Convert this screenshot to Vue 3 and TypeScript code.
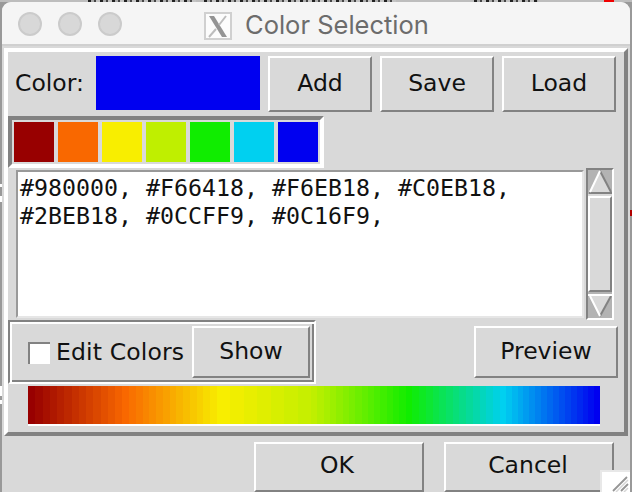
<script setup lang="ts">
type Rgb = [number, number, number]

const swatches: Rgb[] = [
  [152, 0, 0],
  [249, 104, 0],
  [248, 238, 0],
  [191, 239, 0],
  [16, 237, 0],
  [0, 208, 240],
  [0, 0, 240],
]
const codes = '#980000, #F66418, #F6EB18, #C0EB18, #2BEB18, #0CCFF9, #0C16F9,'

const stepCounts = [13, 14, 7, 15, 14, 16]
const css = (c: Rgb) => `rgb(${c.join(',')})`

const bands: { color: string; size: number }[] = []
stepCounts.forEach((n, i) => {
  for (let k = 0; k < n; k++) {
    const t = k / n
    const mixed = swatches[i].map((v, j) => Math.round(v + (swatches[i + 1][j] - v) * t)) as Rgb
    bands.push({ color: css(mixed), size: 1 / n })
  }
})
bands.push({ color: css(swatches[6]), size: 0.06 })
</script>

<template>
  <div class="screen">
    <i class="mark m1"></i><i class="mark m2"></i><i class="mark m3"></i>
    <i class="mark red"></i><i class="mark redtop"></i>
    <div class="window">
      <header class="titlebar">
        <div class="lights"><span></span><span></span><span></span></div>
        <div class="title">
          <svg width="28" height="28" viewBox="0 0 28 28">
            <rect x="1" y="1" width="26" height="26" fill="#fcfcfc" stroke="#d0d0d0" stroke-width="2" />
            <path d="M5 4H10L23 25H18Z" fill="#949494" />
            <path d="M22 4L15 13M12 17L5 25" stroke="#bdbdbd" stroke-width="2" fill="none" />
          </svg>
          <span>Color Selection</span>
        </div>
      </header>
      <main class="frame">
        <div class="toprow">
          <span class="label">Color:</span>
          <div class="current"></div>
          <button class="add">Add</button>
          <button class="save">Save</button>
          <button class="load">Load</button>
        </div>
        <div class="swatches">
          <span v-for="(c, i) in swatches" :key="i" :style="{ background: css(c) }"></span>
        </div>
        <div class="editor">
          <div class="codes">{{ codes }}</div>
          <div class="scroll">
            <svg width="24" height="24" viewBox="0 0 24 24">
              <path d="M12 1L23 23H1Z" fill="#d9d9d9" />
              <path d="M12 1L23 22" stroke="#828282" stroke-width="2" />
              <path d="M1 23H24" stroke="#828282" stroke-width="2" />
              <path d="M12 1L2 22" stroke="#fff" stroke-width="2" />
            </svg>
            <div class="thumb"></div>
            <svg width="24" height="24" viewBox="0 0 24 24">
              <path d="M1 1H23L12 22Z" fill="#d9d9d9" />
              <path d="M23 2L12 22" stroke="#828282" stroke-width="2" />
              <path d="M0 1H24M2 2L12 22" stroke="#fff" stroke-width="2" />
            </svg>
          </div>
        </div>
        <div class="tools">
          <div class="editbox">
            <span class="check"></span>
            <span class="editlabel">Edit Colors</span>
            <button class="show">Show</button>
          </div>
          <button class="preview">Preview</button>
        </div>
        <div class="ramp">
          <span v-for="(b, i) in bands" :key="i" :style="{ background: b.color, flexGrow: b.size }"></span>
        </div>
      </main>
      <footer class="actions">
        <button class="ok">OK</button>
        <button>Cancel</button>
      </footer>
      <svg class="grip" width="30" height="22" viewBox="0 0 30 22">
        <rect width="30" height="22" fill="#e8e8e8" />
        <rect x="2" y="2" width="28" height="20" fill="#fff" />
        <path d="M13 21L27 7M21 21L28 14" stroke="#969696" stroke-width="1.8" />
        <path d="M16 22L28 10M24 22L28 18" stroke="#d6d6d6" stroke-width="1.5" />
      </svg>
    </div>
  </div>
</template>

<style>
body { margin: 0; overflow: hidden; }
</style>

<style scoped>
* { box-sizing: border-box; }
.screen {
  position: relative;
  width: 632px;
  height: 492px;
  padding: 2px 2px 0;
  overflow: hidden;
  background:
    repeating-linear-gradient(90deg, #222 0 3px, #aaa 3px 6px, #444 6px 8px, #c4c4c4 8px 12px) 88px 0 / 108px 2px no-repeat,
    repeating-linear-gradient(90deg, #222 0 3px, #aaa 3px 6px, #444 6px 8px, #c4c4c4 8px 12px) 204px 0 / 192px 2px no-repeat,
    repeating-linear-gradient(90deg, #222 0 3px, #aaa 3px 6px, #444 6px 8px, #c4c4c4 8px 12px) 474px 0 / 64px 2px no-repeat,
    linear-gradient(#bdbdbd, #bdbdbd) 0 0 / 632px 2px no-repeat,
    #999;
  font: 23.5px "DejaVu Sans", sans-serif;
  color: #111;
}
.mark { position: absolute; left: 0; width: 2px; background: #fff; }
.m1 { top: 184px; height: 18px; border-bottom: 6px solid #fff; background: linear-gradient(#fff 3px, #999 3px); }
.m2 { top: 386px; height: 10px; }
.m3 { top: 400px; height: 4px; }
.red { left: 630px; top: 210px; height: 6px; background: #b00000; }
.redtop { left: 604px; top: 0; width: 10px; height: 2px; background: #f00000; }
.window { position: relative; width: 628px; height: 490px; background: #d9d9d9; border-radius: 9px 9px 0 0; overflow: hidden; }
.titlebar { display: flex; height: 44px; background: #f5f5f5; border-bottom: 2px solid #d0d0d0; }
.lights { display: flex; gap: 16px; padding: 10px 0 0 16px; }
.lights span { width: 24px; height: 24px; border-radius: 50%; background: #d8d8d8; border: 2px solid #cbcbcb; }
.title { display: flex; padding: 10px 0 0 82px; gap: 13px; }
.title span { font: 400 25.5px/28px Inter, sans-serif; color: #6c6c6c; letter-spacing: 0; margin-top: -1px; white-space: nowrap; }
.frame { width: 624px; height: 388px; margin: 2px 0 0 2px; border: 4px solid; border-color: #fff #828282 #828282 #fff; padding-top: 4px; }
button {
  display: flex; align-items: center; justify-content: center;
  padding: 0; border: 2px solid; border-color: #fff #828282 #828282 #fff; border-radius: 0;
  background: #d9d9d9; color: #111; font: inherit; line-height: 1;
}
.toprow { display: flex; height: 56px; gap: 8px; }
.label { width: 80px; padding-left: 7px; line-height: 55px; white-space: nowrap; }
.current { width: 164px; height: 54px; background: #0000f0; }
.add { width: 104px; }
.save { width: 114px; }
.load { width: 114px; }
.swatches { display: flex; gap: 4px; width: 316px; height: 52px; margin-top: 4px; padding: 2px; border: 4px solid; border-color: #828282 #fff #fff #828282; }
.swatches span { width: 40px; height: 40px; }
.editor { display: flex; gap: 2px; padding-left: 8px; height: 152px; }
.codes {
  width: 568px; height: 148px; margin-top: 2px; padding: 2px 0 0 2px; border: 2px solid; border-color: #999 #e6e6e6 #e6e6e6 #999;
  background: #fff; font: 23.25px/28px "DejaVu Sans Mono", monospace;
}
.scroll { display: flex; flex-direction: column; width: 28px; height: 152px; border: 2px solid; border-color: #828282 #fff #fff #828282; background: #b3b3b3; }
.scroll svg { flex: none; }
.thumb { flex: 1; margin-top: 2px; margin-bottom: 2px; border: 2px solid; border-color: #fff #828282 #828282 #fff; background: #d9d9d9; box-shadow: 0 -2px #d9d9d9; }
.tools { display: flex; justify-content: space-between; padding-right: 6px; height: 64px; }
.editbox { display: flex; width: 308px; height: 64px; border: 2px solid; border-color: #828282 #fff #fff #828282; box-shadow: inset 2px 2px #fff, inset -2px -2px #828282; }
.check { width: 22px; height: 22px; margin: 20px 0 0 18px; background: #fff; border: solid #828282; border-width: 2px 0 0 2px; }
.editlabel { width: 136px; margin-left: 6px; line-height: 60px; white-space: nowrap; letter-spacing: 0.15px; }
.show { width: 118px; height: 52px; margin-top: 4px; }
.preview { width: 144px; height: 52px; margin-top: 6px; }
.ramp { display: flex; width: 572px; height: 40px; margin: 2px 0 0 20px; border-bottom: 2px solid #fff; }
.ramp span { flex-basis: 0; }
.actions { display: flex; gap: 20px; padding: 6px 0 0 252px; }
.actions button { width: 170px; height: 50px; padding: 0 2px 3px 0; }
.actions .ok { padding-right: 4px; }
.grip { position: absolute; right: 0; bottom: 0; }
</style>
